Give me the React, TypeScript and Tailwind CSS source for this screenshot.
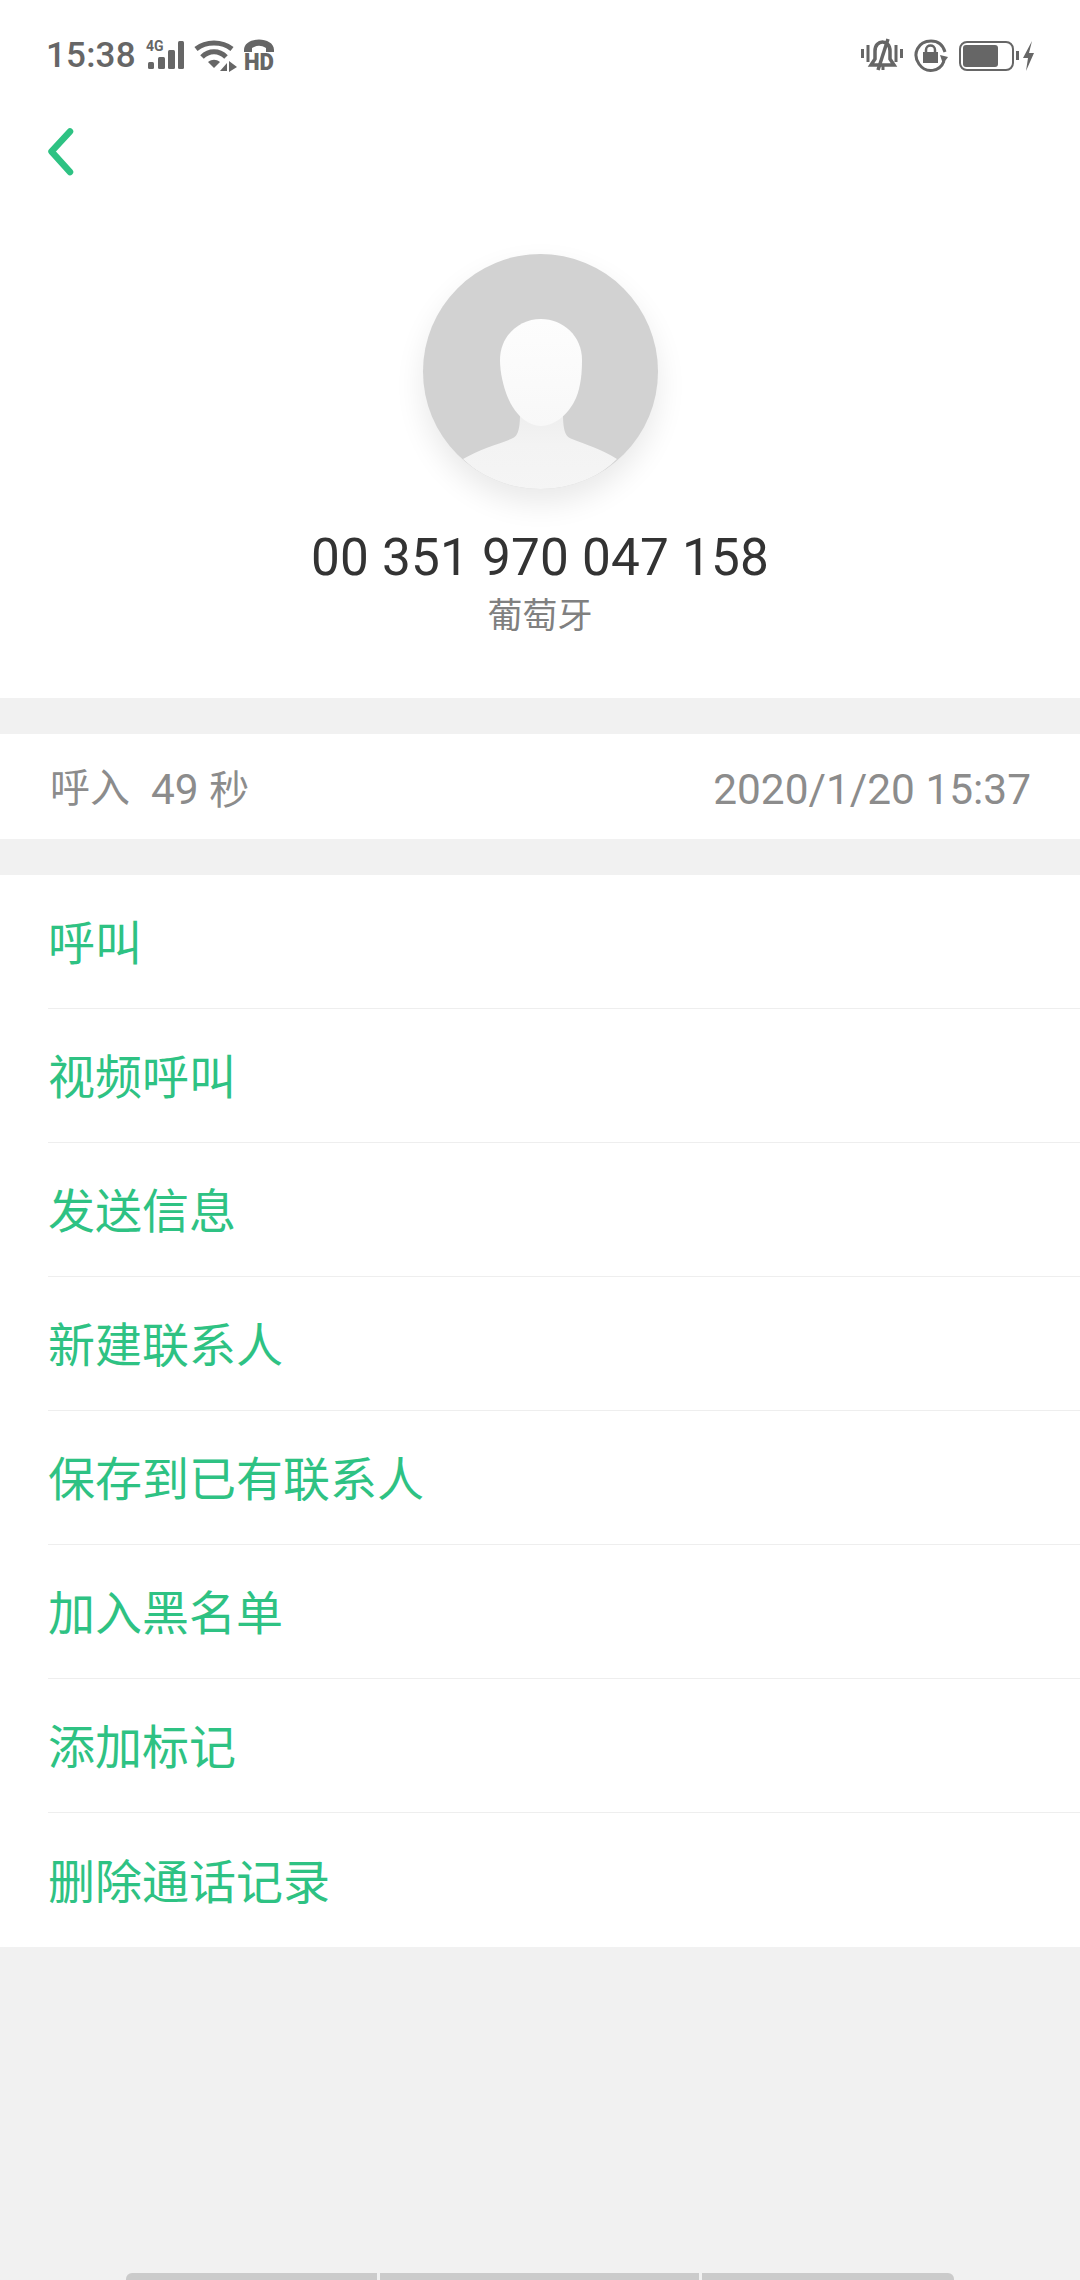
const actions = ["呼叫", "视频呼叫", "发送信息", "新建联系人", "保存到已有联系人", "加入黑名单", "添加标记", "删除通话记录"];

const font = "font-['Roboto','Noto_Sans_CJK_SC',sans-serif]";

function StatusLeft() {
  return (
    <div className="flex items-center">
      <span className="text-[35px] leading-[40px] font-medium text-[#666666] tracking-[0.2px]">15:38</span>
      <svg width="40" height="34" viewBox="0 0 40 34" className="ml-[10px] overflow-visible" fill="#666666">
        <rect x="2" y="23" width="6" height="7" rx="1.5" />
        <rect x="12" y="18" width="7" height="12" rx="1.5" />
        <rect x="22" y="11" width="7" height="19" rx="1.5" />
        <rect x="32" y="2" width="6" height="28" rx="1.5" />
        <text x="0" y="12" fontSize="14" fontWeight="700" fontFamily="Roboto">4G</text>
      </svg>
      <svg width="44" height="34" viewBox="0 0 44 34" className="ml-[8px]" fill="none" stroke="#666666">
        <path d="M2 10C12 2 28 2 38 10" strokeWidth="5" />
        <path d="M8 18C15 11 25 11 32 18" strokeWidth="5" />
        <path d="M14 23C18 20 22 20 26 23L20 29Z" fill="#666666" stroke="none" />
        <path d="M26 32L33 24V32ZM35 22L43 28L35 33Z" fill="#666666" stroke="none" />
      </svg>
      <svg width="30" height="34" viewBox="0 0 30 34" className="ml-[6px] overflow-visible" fill="#666666">
        <path d="M0 11C0 -3 30 -3 30 11V13H22V9C17 6 13 6 8 9V13H0Z" />
        <text x="0" y="31" fontSize="23" fontWeight="900" fontFamily="Roboto" textLength="30" lengthAdjust="spacingAndGlyphs">HD</text>
      </svg>
    </div>
  );
}

function StatusRight() {
  return (
    <div className="flex items-center">
      <svg width="42" height="36" viewBox="0 0 42 36" fill="none" stroke="#666666">
        <path d="M1.5 11V20M7 7V24M35 7V24M40.5 11V20" strokeWidth="3" />
        <path d="M10 27H33L29 21V13C29 1 14 1 14 13V21Z" strokeWidth="3.5" />
        <path d="M17 32L27 1" strokeWidth="3.5" />
        <path d="M22 28V32" strokeWidth="3" />
      </svg>
      <svg width="34" height="34" viewBox="0 0 34 34" className="ml-[11px]" fill="none" stroke="#666666">
        <path d="M30 22C26 33 12 35 5 25C-2 15 4 2 17 2C24 2 29 6 31 13" strokeWidth="3" />
        <path d="M26 16L34 18L29 25Z" fill="#666666" stroke="none" />
        <path d="M12 14V11C12 5 21 5 21 11V14" strokeWidth="2.5" />
        <rect x="9" y="13" width="15" height="11" fill="#666666" stroke="none" />
      </svg>
      <svg width="61" height="32" viewBox="0 0 61 32" className="ml-[11px]" fill="none">
        <rect x="1" y="2" width="53" height="28" rx="7" stroke="#666666" strokeWidth="2" />
        <rect x="4" y="5" width="35" height="22" rx="3" fill="#666666" />
        <rect x="57" y="11" width="3" height="9" fill="#666666" />
      </svg>
      <svg width="13" height="32" viewBox="0 0 13 32" className="ml-[2px]" fill="#666666">
        <path d="M10 1L1 18H6L4 31L12 13H7Z" />
      </svg>
    </div>
  );
}

function Avatar() {
  return (
    <div className="w-[235px] h-[235px] rounded-full bg-[#d2d2d2] shadow-[0_14px_30px_rgba(0,0,0,0.09)] overflow-hidden">
      <svg width="235" height="235" viewBox="0 0 235 235">
        <defs>
          <linearGradient id="face" x1="0" y1="0" x2="0" y2="1">
            <stop offset="0" stopColor="#fdfdfd" />
            <stop offset="1" stopColor="#f8f8f8" />
          </linearGradient>
          <linearGradient id="body" x1="0" y1="0" x2="0" y2="1">
            <stop offset="0" stopColor="#eeeeee" />
            <stop offset="0.4" stopColor="#f3f3f3" />
            <stop offset="1" stopColor="#f5f5f5" />
          </linearGradient>
        </defs>
        <path d="M40 205C55 196 75 190 88 185C94 183 97 178 97 160H140C140 178 143 183 149 185C162 190 180 196 194 205C150 248 85 248 40 205Z" fill="url(#body)" />
        <path d="M118 65C96 65 77 82 77 106C77 118 80 132 85 144C91 158 103 172 118 172C133 172 147 158 153 144C158 132 159 118 159 106C159 82 140 65 118 65Z" fill="url(#face)" />
      </svg>
    </div>
  );
}

export default function App() {
  return (
    <div className={`${font} w-[1080px] h-[2280px] bg-[#f1f1f1] flex flex-col overflow-hidden`}>
      <header className="h-[698px] bg-white flex flex-col">
        <div className="h-[112px] pl-[46px] pr-[45px] flex items-center justify-between">
          <StatusLeft />
          <StatusRight />
        </div>
        <div className="h-[60px] pl-[48px]">
          <svg width="26" height="48" viewBox="0 0 26 48" fill="none" stroke="#2ec283" strokeWidth="6.5" strokeLinecap="round" strokeLinejoin="round" className="mt-[16px]">
            <path d="M22 3.5L3.5 23.5L22 44" />
          </svg>
        </div>
        <div className="mt-[82px] flex flex-col items-center">
          <Avatar />
          <div className="mt-[39px] text-[51.3px] leading-[60px] text-[#333333] tracking-[0.2px]">00 351 970 047 158</div>
          <div className="mt-[7px] text-[35px] leading-[44px] text-[#808080]">葡萄牙</div>
        </div>
      </header>

      <section className="mt-[36px] h-[105px] bg-white pl-[50px] pr-[49px] pt-[6px] flex items-center justify-between text-[42.4px] text-[#8c8c8c]">
        <span className="flex items-center gap-[21px]">
          <span className="text-[40px]">呼入</span>
          <span>
            49 <span className="text-[40px]">秒</span>
          </span>
        </span>
        <span>2020/1/20 15:37</span>
      </section>

      <ul className="mt-[36px] bg-white">
        {actions.map((a, i) => (
          <li key={a} className="pl-[48px]">
            <div className={`h-[134px] pt-[6px] flex items-center text-[47px] text-[#2ec283] ${i < actions.length - 1 ? "border-b border-[#eeeeee]" : ""}`}>{a}</div>
          </li>
        ))}
      </ul>

      <div className="mt-auto mx-[126px] flex gap-[3px]">
        <div className="w-[251px] h-[7px] bg-[#cbcbcb] rounded-tl-[6px]" />
        <div className="w-[319px] h-[7px] bg-[#cbcbcb]" />
        <div className="flex-1 h-[7px] bg-[#cbcbcb] rounded-tr-[6px]" />
      </div>
    </div>
  );
}
